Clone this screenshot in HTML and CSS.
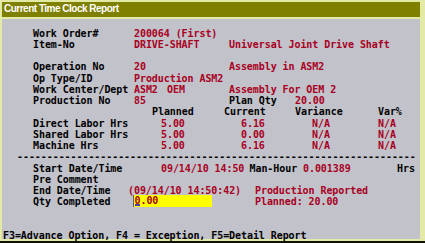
FILE: index.html
```html
<!DOCTYPE html>
<html lang="en">
<head>
    <meta charset="UTF-8">
    <title>Current Time Clock Report</title>
    <link rel="stylesheet" href="styles.css">
</head>
<body>
    <div class="window">
        <div class="titlebar">Current Time Clock Report</div>
        <div class="screen">
            <div class="line"><span class="lbl">Work Order#</span><span class="val red">200064 (First)</span></div>
            <div class="line"><span class="lbl">Item-No</span><span class="val red">DRIVE-SHAFT</span><span class="red">Universal Joint Drive Shaft</span></div>
            <div class="line"></div>
            <div class="line"><span class="lbl">Operation No</span><span class="val red">20</span><span class="red">Assembly in ASM2</span></div>
            <div class="line"><span class="lbl">Op Type/ID</span><span class="val red">Production ASM2</span></div>
            <div class="line"><span class="lbl">Work Center/Dept</span><span class="wc red">ASM2</span><span class="dept red">OEM</span><span class="red">Assembly For OEM 2</span></div>
            <div class="line"><span class="lbl">Production No</span><span class="val red">85</span><span class="plan-lbl">Plan Qty</span><span class="red">20.00</span></div>
            <div class="line head"><span class="h-plan">Planned</span><span class="h-cur">Current</span><span class="h-var">Variance</span><span>Var%</span></div>
            <div class="line"><span class="lbl-hrs">Direct Labor Hrs</span><span class="n-plan red">5.00</span><span class="n-cur red">6.16</span><span class="n-var red">N/A</span><span class="red">N/A</span></div>
            <div class="line"><span class="lbl-hrs">Shared Labor Hrs</span><span class="n-plan red">5.00</span><span class="n-cur red">0.00</span><span class="n-var red">N/A</span><span class="red">N/A</span></div>
            <div class="line"><span class="lbl-hrs">Machine Hrs</span><span class="n-plan red">5.00</span><span class="n-cur red">6.16</span><span class="n-var red">N/A</span><span class="red">N/A</span></div>
            <div class="line dash">-------------------------------------------------------------------</div>
            <div class="line"><span class="lbl-hrs">Start Date/Time</span><span class="start-val red">09/14/10 14:50</span><span class="mh">Man-Hour</span><span class="mh-val red">0.001389</span><span>Hrs</span></div>
            <div class="line"><span class="lbl">Pre Comment</span></div>
            <div class="line"><span class="lbl-end">End Date/Time</span><span class="end-val red">(09/14/10 14:50:42)</span><span class="red">Production Reported</span></div>
            <div class="line"><span class="lbl-qty">Qty Completed</span><span class="qty-box red"><span class="cursor">0</span>.00</span><span class="qty-note red">Planned: 20.00</span></div>
            <div class="line"></div>
            <div class="line"></div>
            <div class="line footer">F3=Advance Option, F4 = Exception, F5=Detail Report</div>
        </div>
    </div>
</body>
</html>
```

FILE: styles.css
```css
html, body {
    margin: 0;
    height: 100%;
}
body {
    background: #e2eaa6;
}
.window {
    box-sizing: border-box;
    height: 243px;
    padding: 2px 5px 2px 2px;
    border-bottom: 2px solid #101000;
    display: flex;
    flex-direction: column;
}
.titlebar {
    height: 15px;
    margin-bottom: 2px;
    padding-left: 2px;
    background: #808000;
    color: #fff;
    font: bold 10px/13px "Liberation Sans", Arial, sans-serif;
    letter-spacing: -0.5px;
}
.screen {
    flex: 1;
    padding-top: 8.7px;
    background: #c2c2ca;
    color: #000;
    font: bold 10px "DejaVu Sans Mono", monospace;
    letter-spacing: -0.07px;
}
.line {
    display: flex;
    height: 11.25px;
    line-height: 11.25px;
    padding-left: 31px;
    white-space: pre;
}
.line span {
    flex-shrink: 0;
}
.red {
    color: #a8001e;
}

/* header block */
.lbl { width: 101px; }
.val { width: 95px; }
.wc { width: 33px; }
.dept { width: 62px; }
.plan-lbl { width: 66px; }

/* hours table */
.line.head { padding-left: 150px; }
.h-plan { width: 72px; }
.h-cur { width: 71px; }
.h-var { width: 83px; }
.lbl-hrs { width: 128px; }
.n-plan { width: 80px; }
.n-cur { width: 71px; }
.n-var { width: 66px; }

.line.dash { padding-left: 15px; }

/* dates */
.start-val { width: 88.5px; }
.mh { width: 53.5px; }
.mh-val { width: 94px; }
.lbl-end { width: 95px; }
.end-val { width: 127px; }

/* qty input */
.lbl-qty { width: 100px; }
.qty-box {
    box-sizing: border-box;
    width: 79px;
    height: 11.7px;
    margin-top: -1.4px;
    padding-left: 0.5px;
    background: #ffff00;
    border-left: 1px solid #606060;
}
.cursor {
    box-shadow: inset 0 -2px 0 #4a3cc0;
}
.qty-note { margin-left: 43px; }

.line.footer {
    height: 9px;
    padding-left: 1px;
}
```
